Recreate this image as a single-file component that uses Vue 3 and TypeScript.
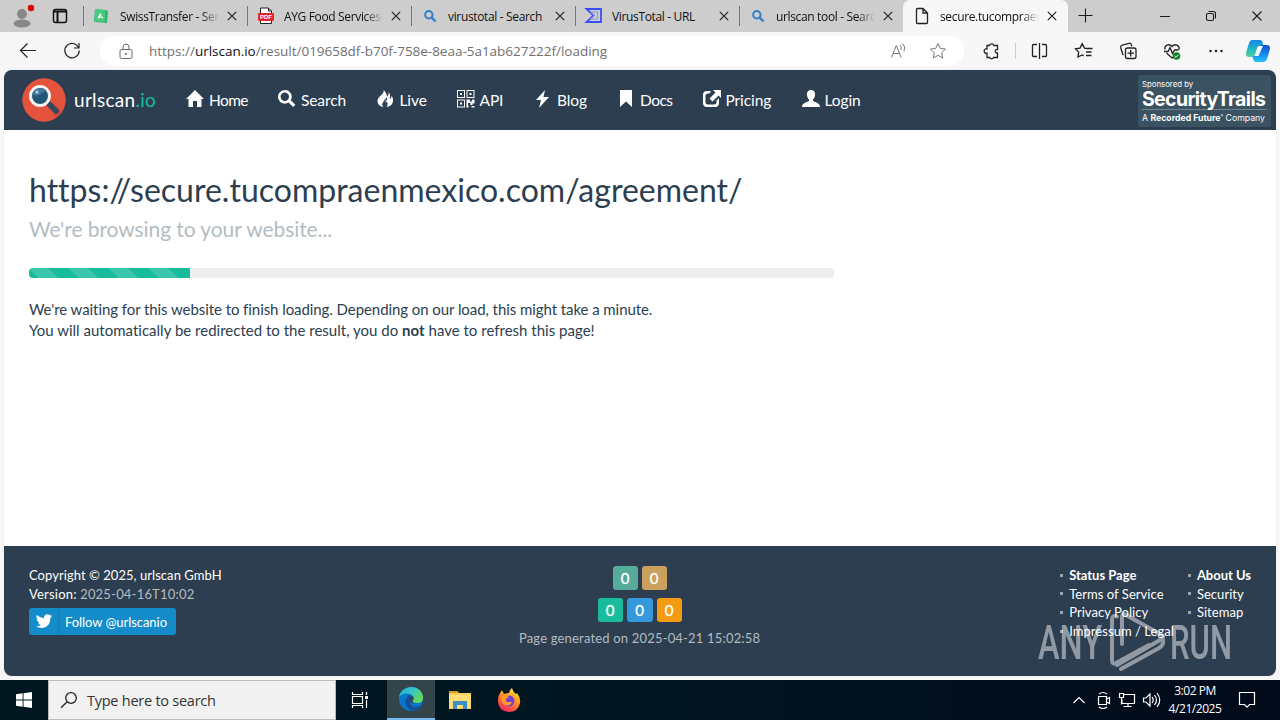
<script setup lang="ts">
interface Tab { title: string; icon: string }
const tabs: Tab[] = [
  { title: 'SwissTransfer - Send', icon: 'swiss' },
  { title: 'AYG Food Services ', icon: 'pdf' },
  { title: 'virustotal - Search', icon: 'search' },
  { title: 'VirusTotal - URL', icon: 'vt' },
  { title: 'urlscan tool - Search', icon: 'search' },
]
interface NavItem { label: string; width: number; path: string }
const nav: NavItem[] = [
  { label: 'Home', width: 92, path: 'M9 0 18 9h-2.500v8H11v-6H7v6H2.500V9H0L9 0' },
  { label: 'Search', width: 98.500, path: 'M6.800 0a6.800 6.800 0 1 0 3.700 12.500l4.600 4.500 2.300-2.300-4.600-4.500A6.800 6.800 0 0 0 6.800 0m0 2.600a4.200 4.200 0 1 1 0 8.400 4.200 4.200 0 0 1 0-8.400' },
  { label: 'Live', width: 80, path: 'M6.500 0C8 4 .5 6 .5 11c0 3 2 5.500 6 6-3.500-4 1.500-5 1.500-9 1 1 1 3 0 5C11.500 10 10.500 3 6.500 0M11.500 2c1 4-3 5-2.500 8 .4 2 3 3 .5 7 4.500-.5 6.500-3 6.500-7 0-2-.5-3-1.500-4 0 2-1 3-2 3 1-2 1-5-1-7' },
  { label: 'API', width: 77.500, path: 'M0 0h8v8H0zm1 1v6h6v-6zM3 3h2v2H3zM9.500 0h8v8h-8zm1 1v6h6v-6zM12.500 3h2v2h-2zM0 9.500h8v8H0zm1 1v6h6v-6zM3 12.500h2v2H3zM9.500 9.500h3.500v2h2v-2h2.500v4h-2v1.500h-2v-2h-2.500v2.500h-1.500zM9.500 15.500h2v2h-2zM14.500 16h3v1.500h-3z' },
  { label: 'Blog', width: 83, path: 'M11 0 2 10h5L5 18l10-11H9.500z' },
  { label: 'Docs', width: 85.500, path: 'M3 0h12v17l-6-5.500L3 17z' },
  { label: 'Pricing', width: 99, path: 'M8 1 6.500 3.500H5A2.500 2.500 0 0 0 2.500 6v6A2.500 2.500 0 0 0 5 14.500h6a2.500 2.500 0 0 0 2.500-2.500v-1.500L16 8v5a4 4 0 0 1-4 4H4a4 4 0 0 1-4-4V5a4 4 0 0 1 4-4zM10 0h8v8l-2.500-2.500-6 6L6.500 8.500l6-6z' },
  { label: 'Login', width: 60, path: 'M9 0c-3 0-4.300 2.200-4 5 .2 2 1 3.700 2 4.600v1.500C4 12.500 0 13.500 0 17h18c0-3.500-4-4.500-7-5.900V9.600c1-.9 1.800-2.600 2-4.600.3-2.800-1-5-4-5' },
]
const linksA = ['Status Page', 'Terms of Service', 'Privacy Policy', 'Impressum / Legal']
const linksB = ['About Us', 'Security', 'Sitemap']
const progress = 20
</script>

<template>
  <div class="screen">
    <div class="tabs">
      <div class="tabs-left">
        <svg class="avatar" width="24" height="28" viewBox="0 0 24 28"><circle cx="11" cy="12" r="5" fill="#8a8886" /><ellipse cx="11" cy="21.500" rx="8.500" ry="4" fill="#8a8886" /><circle cx="20" cy="6" r="3.200" fill="#dc0000" /></svg>
        <svg width="16" height="16" viewBox="0 0 16 16" fill="none" stroke="#111" stroke-width="1.500"><rect x="1.500" y="1.500" width="13" height="13" rx="2" /><path d="M1.500 3.500h13M5.500 4v10" stroke-width="2" /></svg>
      </div>
      <div v-for="(t, i) in tabs" :key="i" class="tab">
        <svg class="fav" width="18" height="18" viewBox="0 0 18 18">
          <g v-if="t.icon === 'swiss'"><path d="M3 2 14 3l2 1-1 12-12-1-1-2z" fill="#2fb56b" /><path d="M3 2 13 3v12l-10-1z" fill="#45cc82" /><path d="m8 5 4 7-3-1-4 1zM9 8v3" fill="#fff" stroke="#2fb56b" stroke-width=".5" /></g>
          <g v-else-if="t.icon === 'pdf'" transform="translate(1 0)"><path d="M3.500 1h8l3 3v12.500h-11z" fill="#fff" stroke="#222" /><path d="M11.500 1v3h3" fill="none" stroke="#222" /><rect x="1" y="6" width="16" height="8" rx="1" fill="#e5252a" /><text x="9" y="12.300" text-anchor="middle" class="pdf">PDF</text></g>
          <g v-else-if="t.icon === 'search'" fill="none" stroke="#2f7fca"><circle cx="8.800" cy="7.800" r="3.700" stroke-width="2" /><path d="m11.700 10.700 3.800 3.800" stroke-width="2.400" /></g>
          <g v-else fill="none" stroke="#394eff" stroke-width="1.800"><path d="M2.500 2H17v13H2.500l7-6.500z" /><path d="M6.500 5h7v7h-7L10 8.500z" stroke="#8c96e8" stroke-width="1" /></g>
        </svg>
        <span class="tab-title" :class="{ fade: i !== 2 && i !== 3 }">{{ t.title }}</span>
        <svg class="x" width="10" height="10" viewBox="0 0 10 10"><path d="m.8.8 8.400 8.400M9.200.8.8 9.200" stroke="#222" stroke-width="1.200" /></svg>
      </div>
      <div class="tab active">
        <svg class="fav" width="18" height="18" viewBox="0 0 18 18"><path d="M5.500 1.500h5.500l4.500 4.500v9.500a1 1 0 0 1-1 1h-9a1 1 0 0 1-1-1v-13a1 1 0 0 1 1-1M11 1.500V6h4.500" fill="none" stroke="#222" stroke-width="1.300" /></svg>
        <span class="tab-title fade">secure.tucompraenm</span>
        <svg class="x" width="10" height="10" viewBox="0 0 10 10"><path d="m.8.8 8.400 8.400M9.200.8.8 9.200" stroke="#222" stroke-width="1.200" /></svg>
      </div>
      <svg class="window-icons" width="212" height="32" viewBox="1068 0 212 32" fill="none" stroke="#1b1b1b" stroke-width="1.100"><path d="M1078.500 15.500h14M1085.500 8.500v14M1160 16.500h10M1252.500 11.500l9 9M1261.500 11.500l-9 9" /><rect x="1206.500" y="13.500" width="7" height="7" rx="1.500" /><path d="M1208.500 11.500h5a2 2 0 0 1 2 2v5" /></svg>
    </div>

    <div class="toolbar">
      <svg width="100" height="38" viewBox="0 32 100 38" fill="none" stroke="#222" stroke-width="1.200"><path d="M20.500 50.500H36M27.500 43.500l-7 7 7 7" /><path d="M78.500 47.500a7.200 7.200 0 1 0 .7 3M79 43v5h-5" /></svg>
      <div class="address">
        <svg class="lock" width="14" height="17" viewBox="0 0 14 17" fill="none" stroke="#686868"><rect x="1" y="6.500" width="12" height="9" rx="1.500" /><path d="M4 6V4a3 3 0 0 1 6 0v2" /><circle cx="7" cy="11" r="1" fill="#686868" stroke="none" /></svg>
        <span class="url">https://<b>urlscan.io</b>/result/019658df-b70f-758e-8eaa-5a1ab627222f/loading</span>
        <svg class="addr-icons" width="60" height="22" viewBox="888 40 60 22" fill="none" stroke="#777"><path d="m891.500 57.500 4.800-12 4.800 12M893 53.500h6.500M900 45q2 2 1 5M902.500 43.500q3.500 3 1.500 8" /><path d="m938 43.500 2.300 4.900 5.200.7-3.800 3.600 1 5.300-4.700-2.600-4.700 2.600 1-5.300-3.800-3.600 5.200-.7z" /></svg>
      </div>
      <svg class="tools" width="316" height="38" viewBox="964 32 316 38" fill="none" stroke="#222" stroke-width="1.300">
        <path d="M987 45.500h2.500a2.300 2.300 0 0 1 4.400 0h3.600v4a1.800 1.800 0 1 0 0 3.500v4.500h-4a2 2 0 0 1-3.800 0H987v-4.300a2.200 2.200 0 1 1 0-4.200z" />
        <path d="M1015.500 43v16" stroke="#ccc" stroke-width="1" />
        <path d="M1037 44.500h-3.500a1 1 0 0 0-1 1v10a1 1 0 0 0 1 1h3.500M1042 44.500h3.500a1 1 0 0 1 1 1v10a1 1 0 0 1-1 1H1042M1039.500 43v16" />
        <path d="m1087 48.500-2.500-.4-2.300-4.400-2.200 4.400-4.500.7 3.200 3.300-.8 4.900 4.300-2 1.600.8M1086 48.500h6.500M1086 52h5.500M1086 55.500h5.500" />
        <path d="M1123.500 55a3 3 0 0 1-1-1.500l-1.800-6a2 2 0 0 1 1.500-2.400l6.800-1.800a2 2 0 0 1 2.400 1.400l.5 1.600" /><rect x="1125.500" y="48" width="10.500" height="10.500" rx="2" /><path d="M1130.700 50v6.500M1127.500 53.200h6.500" />
        <path d="M1165 49.500c-1-4 4-6.500 7-3 3-3.500 8-1 7 3M1166.500 53l5.500 5 2-1.500M1164 51.500h4l2-4 2.500 6 2-3.500h4" /><circle cx="1176.500" cy="56" r="3.800" fill="#128023" stroke="none" /><path d="m1174.600 56 1.400 1.400 2.500-2.700" stroke="#fff" stroke-width="1" />
        <g fill="#222" stroke="none"><circle cx="1210.500" cy="51" r="1.250" /><circle cx="1216" cy="51" r="1.250" /><circle cx="1221.500" cy="51" r="1.250" /></g>
        <defs><linearGradient id="cp1" x1="0" y1="0" x2="0" y2="1"><stop stop-color="#1686ea" /><stop offset=".55" stop-color="#22b7c1" /><stop offset="1" stop-color="#52d394" /></linearGradient><linearGradient id="cp2" x1="0" y1="0" x2="0" y2="1"><stop stop-color="#144ec5" /><stop offset=".5" stop-color="#1488ee" /><stop offset="1" stop-color="#27c1fb" /></linearGradient></defs>
        <g stroke="none"><path d="M1252 40h8q2 0 2.500 2l1 4h-4q-2 0-2.500 2l-2 7q-.5 2-2 2h-3.500q-4 0-3.500-4l3-10q1-3 3-3" fill="url(#cp1)" /><path d="M1263 45h3.500q4 0 3.500 4l-3 10q-1 3-3 3h-8q-2 0-2.500-2l-1-4h3q2 0 2.500-2l2-7q.5-2 3-2" fill="url(#cp2)" /><path d="M1259 46h4l-4.500 10h-4z" fill="#f4fbff" /></g>
      </svg>
    </div>

    <div class="page">
      <header class="header">
        <svg class="logo" width="44" height="44" viewBox="0 0 44 44"><circle cx="22" cy="22" r="21.700" fill="#e5533f" /><path d="m27 28 4-3 9 9-6 6z" fill="#cf4738" /><path d="m27 26 7 7" stroke="#34485a" stroke-width="5.500" stroke-linecap="round" /><circle cx="18" cy="18" r="9.500" fill="#245675" stroke="#f5f4f1" stroke-width="3" /><path d="M11 17a8 8 0 0 1 13-5q-6 7-13 5" fill="#3f789a" /><circle cx="15" cy="14" r="1.700" fill="#a6cbdc" /></svg>
        <span class="brand">urlscan<i>.io</i></span>
        <nav class="nav">
          <a v-for="n in nav" :key="n.label" class="nav-item" :style="{ width: n.width + 'px' }"><svg width="18" height="18" viewBox="0 0 18 18"><path :d="n.path" fill="#fff" fill-rule="evenodd" /></svg><span>{{ n.label }}</span></a>
        </nav>
        <div class="sponsor"><span class="by">Sponsored by</span><strong>SecurityTrails</strong><span class="rf">A <b>Recorded Future</b><sup>®</sup> Company</span></div>
      </header>

      <main class="main">
        <h1>https://secure.tucompraenmexico.com/agreement/</h1>
        <h2>We're browsing to your website...</h2>
        <div class="track"><div class="bar" :style="{ width: progress + '%' }"></div></div>
        <p><span class="line1">We're waiting for this website to finish loading. Depending on our load, this might take a minute.</span><br><span class="line2">You will automatically be redirected to the result, you do <b>not</b> have to refresh this page!</span></p>
      </main>

      <footer class="footer">
        <div class="foot-left">
          <div class="copy">Copyright © 2025, urlscan GmbH</div>
          <div class="version">Version: <span>2025-04-16T10:02</span></div>
          <div class="follow"><span class="bird"><svg width="16" height="14" viewBox="0 0 16 14"><path d="M16 2q-1 .4-1.700.4Q15.200 1.800 15.600.5q-1 .6-2.100.8A3.300 3.300 0 0 0 8 4.300Q4 4.200 1 1q-1.500 3 1 4.600L.7 5.200q0 2.700 2.600 3.400H2Q2.700 10.800 5 11q-2.200 1.600-5 1.300 4 2.500 8.500 1.200 6-2 5.900-9.700Q15.500 3 16 2" fill="#fff" /></svg></span><span class="follow-text">Follow @urlscanio</span></div>
        </div>
        <div class="foot-mid">
          <div class="badges"><span class="bd b1">0</span><span class="bd b2">0</span></div>
          <div class="badges"><span class="bd b3">0</span><span class="bd b4">0</span><span class="bd b5">0</span></div>
          <div class="generated">Page generated on 2025-04-21 15:02:58</div>
        </div>
        <ul class="la"><li v-for="(l, i) in linksA" :key="l" :class="{ strong: i === 0 }">{{ l }}</li></ul>
        <ul class="lb"><li v-for="(l, i) in linksB" :key="l" :class="{ strong: i === 0 }">{{ l }}</li></ul>
      </footer>
    </div>

    <div class="watermark">
      <svg width="198" height="66" viewBox="0 0 198 66"><text x="1" y="51" textLength="64" lengthAdjust="spacingAndGlyphs" class="wm">ANY</text><text x="133" y="51" textLength="62" lengthAdjust="spacingAndGlyphs" class="wm">RUN</text><g fill="none" stroke="#fff" stroke-width="4" stroke-linejoin="round" stroke-linecap="round"><path d="M80 8.500q-5-2-5 3V52q0 5 4 3l33-18M85 36V9q0-5 4-2l34 19q6 3 0 6L80 57M84 61l38-21q5-3 4-8" /></g></svg>
    </div>

    <div class="taskbar">
      <div class="start"><svg width="16" height="16" viewBox="0 0 16 16" fill="#fff"><path d="m0 2.200 6.600-.9v6.200H0zM7.500 1.200 16 0v7.500H7.500zM0 8.400h6.600v6.300L0 13.800zM7.500 8.400H16V16l-8.500-1.200z" /></svg></div>
      <div class="search"><svg width="18" height="18" viewBox="0 0 18 18" fill="none" stroke="#222" stroke-width="1.300"><circle cx="11" cy="7" r="5.300" /><path d="m7.200 10.800-6.200 6" /></svg><span>Type here to search</span></div>
      <div class="app"><svg width="18" height="18" viewBox="0 0 18 18" fill="none" stroke="#fff" stroke-width="1.200"><path d="M1.500 1v2.500h10V1M1.500 17v-2.500h10V17M1.500 5.500h10v7h-10zM15.500 1v3M15.500 9v8" /><path d="M14 5h3v3h-3z" fill="#fff" stroke="none" /></svg></div>
      <div class="app current"><svg width="26" height="26" viewBox="0 0 26 26"><defs><linearGradient id="eg" x1="0" y1="0" x2="1" y2=".5"><stop stop-color="#28a8df" /><stop offset=".5" stop-color="#33c5cc" /><stop offset="1" stop-color="#62d860" /></linearGradient></defs><circle cx="13" cy="13" r="12" fill="#0876cb" /><path d="M1 11C3-1 22-3 25 10q1 7-6 7-6 0-4-3 2-4-3-6Q5 6 1 11" fill="url(#eg)" /><path d="M11 9q-8 8 1 15 6 2 11-4-11 3-11-5 0-3 2-4z" fill="#135099" /><path d="M14 10q3 2 1 4-2 3 3 4-6 0-6-4 0-2 2-4" fill="#34444b" /></svg></div>
      <div class="app"><svg width="22" height="20" viewBox="0 0 22 20"><path d="M0 1h8l2 2h12v16H0z" fill="#f8cf5e" /><path d="M0 1h8l2 2H0z" fill="#d99a1f" /><path d="M0 5h22v13H0z" fill="#ffdc74" /><path d="M4 11h14v8h-4v-4H8v4H4z" fill="#3a91ca" /></svg></div>
      <div class="app"><svg width="24" height="24" viewBox="0 0 24 24"><defs><linearGradient id="ff" x1=".8" y1="0" x2=".3" y2="1"><stop stop-color="#ffe34b" /><stop offset=".45" stop-color="#ff9520" /><stop offset="1" stop-color="#f42362" /></linearGradient></defs><path d="M3 5 5 2l2 4q3-1 5-1 0-3 3-5 1 4 4 6l1-1q4 5 3 10-2 9-11 9Q1 23 1 13q0-5 2-8" fill="url(#ff)" /><circle cx="12" cy="13" r="5.500" fill="#7541cf" /><path d="M5 8q4-1 7 1l-3 2q-1 3 2 3h4q-2 5-7 3Q3 14 5 8" fill="#ff9a25" /></svg></div>
      <svg class="tray" width="120" height="40" viewBox="1060 680 120 40" fill="none" stroke="#fff" stroke-width="1.200"><path d="m1073.500 703 5.500-5.500 5.500 5.500M1098.500 696.500h8v8h-8zM1106.500 699l3-1.500v6l-3-1.500M1099 694q4-3 8 0M1099 707q4 3 8 0" /><path d="M1124 694.500h10.500v9H1122v-4M1128 703.500v3M1123.500 706.500h8M1119.500 693.500h4v4h-4zM1121.500 697.500v7" /><path d="M1143.500 698h2.500l4-4v12l-4-4h-2.500zM1152 697q2.500 3 0 6M1154.500 695q4 5 0 10M1157 693q5.500 7 0 14" /></svg>
      <div class="clock"><span class="time">3:02 PM</span><span class="date">4/21/2025</span></div>
      <svg class="notice" width="18" height="18" viewBox="0 0 18 18" fill="none" stroke="#fff" stroke-width="1.200"><path d="M1.500 1.500h15v12h-5l-2.500 2.700-2.500-2.700h-5z" /></svg>
    </div>
  </div>
</template>

<style>
body { margin: 0; overflow: hidden; }
</style>
<style scoped>
* { box-sizing: border-box; }
.screen { width: 1280px; height: 720px; background: #f7f7f7; font-family: "Lato", "Open Sans", sans-serif; position: relative; overflow: hidden; white-space: nowrap; }
svg { flex: none; display: block; }
.tabs { height: 32px; display: flex; background: #cdcdcd; font: 12px "Open Sans", sans-serif; color: #111; }
.tabs-left { width: 83px; display: flex; align-items: center; padding-left: 11px; gap: 17px; }
.avatar { margin-top: -1px; }
.tab { width: 164px; display: flex; align-items: center; padding-left: 9px; position: relative; }
.tab::before { content: ""; position: absolute; left: 0; top: 6px; height: 20px; width: 1px; background: #777; }
.fav { margin-right: 10px; }
.tab-title { width: 99px; overflow: hidden; letter-spacing: -.35px; }
.fade { -webkit-mask-image: linear-gradient(90deg, #000 82%, transparent); }
.x { margin-left: 8px; }
.pdf { font: bold 6px "Liberation Sans", sans-serif; fill: #fff; }
.tab.active { background: #f7f7f7; border-radius: 7px 7px 0 0; width: 165px; }
.active::before { display: none; }
.window-icons { width: 212px; }
.toolbar { height: 38px; display: flex; }
.address { width: 864px; height: 30px; margin-top: 4px; background: #fff; border-radius: 15px; display: flex; align-items: center; padding-left: 19px; }
.url { margin-left: 16px; font: 13.500px "Open Sans", sans-serif; color: #707070; width: 459px; letter-spacing: -.02px; }
.url b { font-weight: 400; color: #111; }
.addr-icons { margin-left: auto; margin-right: 16px; }
.page { margin: 0 4px; width: 1272px; height: 606px; border-radius: 8px; overflow: hidden; background: #fff; display: flex; flex-direction: column; box-shadow: 0 0 1px #aaa; }
.header { height: 60px; flex: none; background: #2c3e50; display: flex; align-items: center; color: #fff; padding: 0 5px 0 18px; }
.brand { font-size: 19px; margin: -1px 0 0 8px; width: 112px; letter-spacing: .3px; }
.brand i { font-style: normal; color: #18bc9c; }
.nav { display: flex; }
.nav-item { display: flex; align-items: center; font-size: 15.500px; letter-spacing: -.1px; height: 24px; }
.nav-item svg { margin: -3px 5px 0 0; }
.nav-item span { margin-top: 0; }
.nav-item:first-child span { letter-spacing: -.6px; }
.nav-item:nth-child(6) span { letter-spacing: -.5px; }
.sponsor { margin-left: auto; width: 133px; height: 52px; margin-top: 1px; padding: 5px 4px; background: #3b5263; border-radius: 3px; display: flex; flex-direction: column; font-family: Inter, sans-serif; line-height: 1; }
.by { font-size: 7.800px; line-height: 9px; }
.sponsor strong { font-size: 19.500px; line-height: 20px; height: 21px; letter-spacing: -.65px; border-bottom: 1px solid #71828e; }
.rf { font-size: 8.700px; margin-top: 4px; }
.rf sup { font-size: 4px; line-height: 0; }
.main { height: 416px; padding: 39px 25px 0; color: #2c3e50; }
h1 { margin: 0; font-weight: 400; font-size: 32px; line-height: 41px; letter-spacing: .01px; }
h2 { margin: 5px 0 0; font-weight: 400; font-size: 21px; line-height: 27px; color: #b4bcc2; letter-spacing: -.08px; }
.track { margin-top: 26px; width: 805px; height: 10px; background: #ecedee; border-radius: 4px; overflow: hidden; }
.bar { height: 10px; background: #18bc9c linear-gradient(45deg, rgba(255,255,255,.15) 25%, transparent 25%, transparent 50%, rgba(255,255,255,.15) 50%, rgba(255,255,255,.15) 75%, transparent 75%) 0 0 / 40px 40px; }
.main p { margin: 21px 0 0; font-size: 15px; line-height: 21px; }
.line1 { letter-spacing: -.07px; }
.line2 { letter-spacing: .01px; }
.footer { height: 130px; background: #2c3e50; color: #fff; font-size: 13px; line-height: 19px; display: flex; padding: 20px 25px 0; }
.foot-left { width: 431px; }
.copy { letter-spacing: .05px; }
.version { letter-spacing: .2px; }
.version span, .generated { color: #b4bcc2; }
.follow { margin-top: 4px; width: 147px; height: 27px; background: #158cca; border-radius: 3px; display: flex; align-items: center; }
.bird { width: 30px; height: 27px; padding: 6px 0 0 7px; border-right: 1px solid #137db5; }
.follow-text { padding: 2px 0 0 6px; font-size: 13px; letter-spacing: -.05px; }
.foot-mid { width: 362px; display: flex; flex-direction: column; align-items: center; }
.badges { display: flex; gap: 4px; height: 24px; margin-bottom: 8px; }
.bd { width: 25px; height: 24px; border-radius: 3px; text-align: center; line-height: 24px; font-size: 15px; font-weight: 400; -webkit-text-stroke: .3px #fff; }
.b1 { background: #56ab9b; } .b2 { background: #cba05c; } .b3 { background: #18bc9c; } .b4 { background: #3498db; width: 26px; } .b5 { background: #f39c12; }
.generated { line-height: 18px; margin-top: -1px; letter-spacing: .18px; }
ul { margin: 0; padding: 0; list-style: none; line-height: 18.600px; }
li { display: flex; align-items: center; letter-spacing: .05px; }
li::before { content: ""; width: 3px; height: 3px; background: #99a5af; margin-right: 6px; }
.strong { font-weight: 700; }
.strong { letter-spacing: -.02px; }
.la { margin-left: 240px; width: 128px; }
.watermark { position: absolute; left: 1037px; top: 608px; opacity: .48; }
.wm { font: 500 49px "Roboto", sans-serif; fill: #fff; }
.taskbar { margin-top: 4px; height: 40px; display: flex; align-items: center; background: linear-gradient(90deg, #001821, #001520 50%, #020a1a); color: #fff; font-family: "Open Sans", sans-serif; }
.start { width: 48px; display: flex; justify-content: center; }
.search { width: 288px; height: 40px; background: #f1f1f1; border: 1px solid #bbb; color: #333; display: flex; align-items: center; padding-left: 11px; gap: 9px; font-size: 14.500px; letter-spacing: -.25px; }
.app { width: 49px; height: 40px; display: flex; align-items: center; justify-content: center; }
.current { background: #34444b; border-bottom: 2px solid #76b9ed; }
.app:nth-child(3) { width: 51px; padding-right: 3px; }
.current { width: 48px; }
.tray { margin-left: auto; }
.clock { width: 46px; display: flex; flex-direction: column; align-items: center; font-size: 12px; letter-spacing: -.45px; line-height: 18px; margin: 0 20px 0 -8px; }
.notice { margin-right: 24px; }
</style>
